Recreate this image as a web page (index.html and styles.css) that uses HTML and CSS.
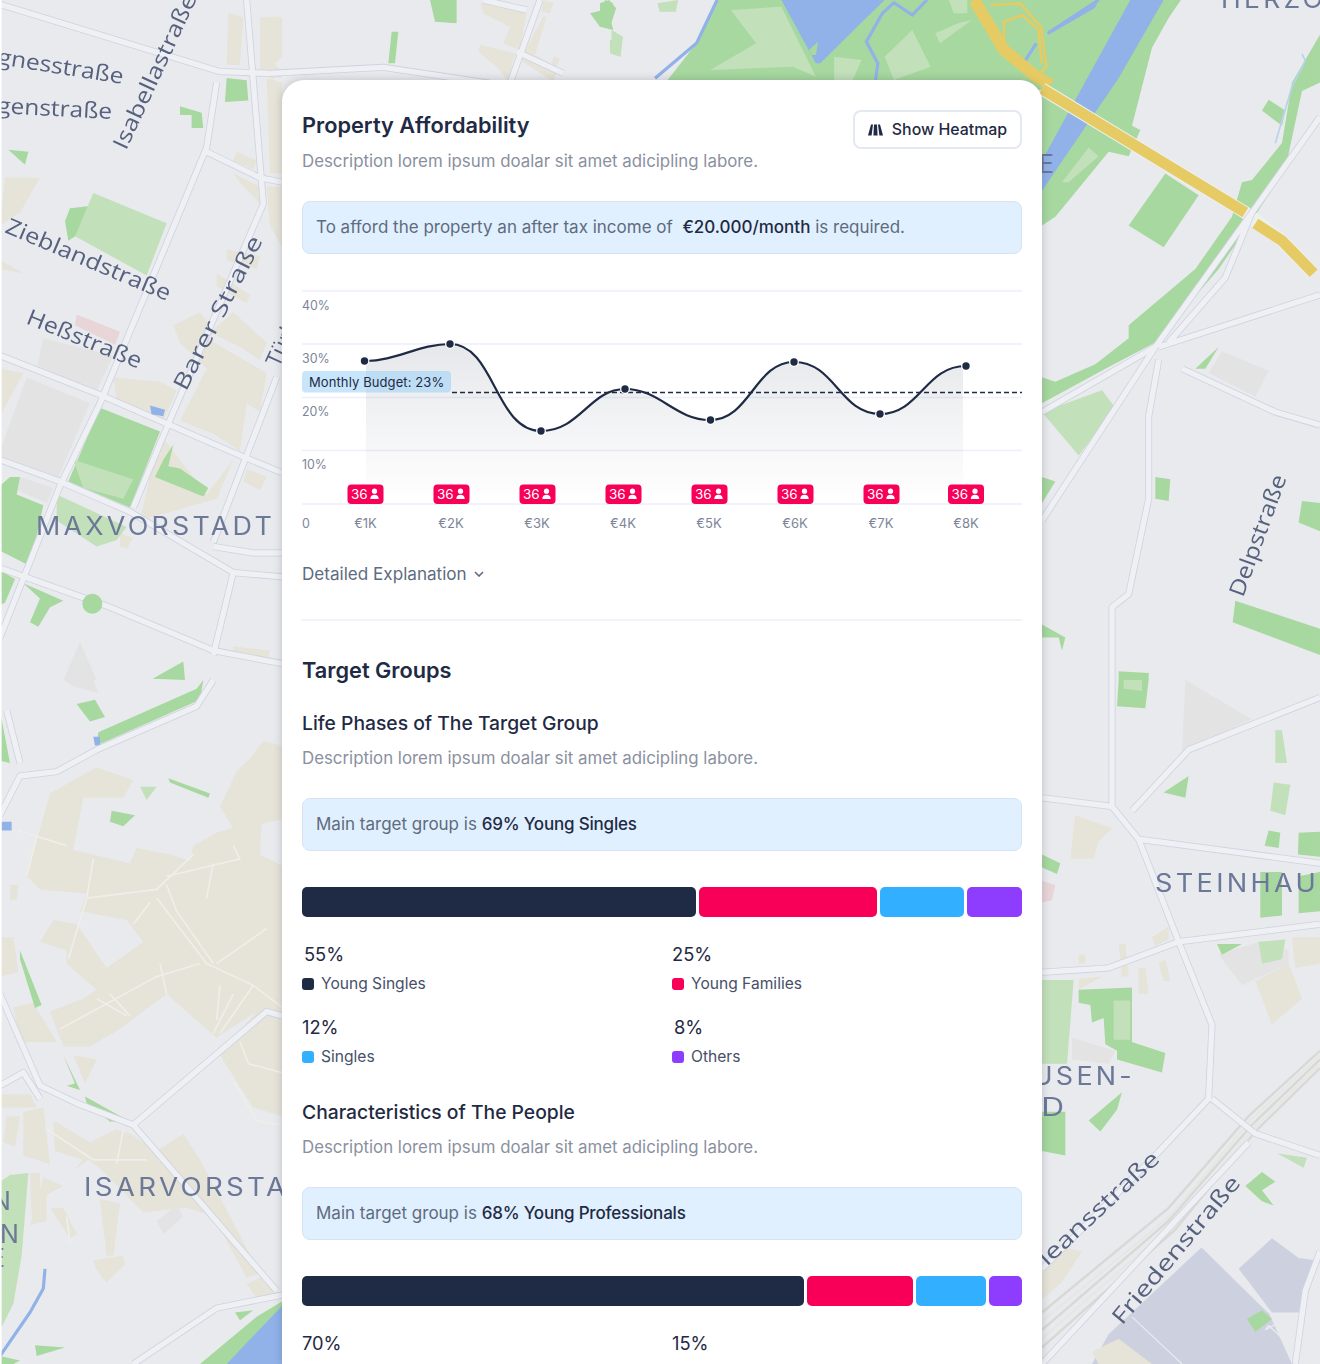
FILE: index.html
```html
<!DOCTYPE html>
<html lang="en">
<head>
<meta charset="utf-8">
<title>Property Affordability</title>
<link rel="stylesheet" href="styles.css">
</head>
<body>
<div class="page">
<svg class="map" viewBox="0 0 1320 1364" width="1320" height="1364" aria-hidden="true">
  <defs>
    <path id="rl1" d="M0 10 L660 165 L846 170 M650 190 L620 340 L300 930 L180 1120 L0 1470 M740 0 L790 470 L520 950 L400 1170 M620 350 L780 410 L846 420 M0 820 L300 910 L720 1050 L846 1090 M0 1060 L180 1110 L390 1180 L700 1320 L640 1510 M0 1310 L220 1370 L330 1400 L640 1500 L846 1530 M830 870 L640 1250 M640 1260 L760 1275 L846 1275 M700 1320 L846 1330"/>
    <path id="rl2" d="M640 0 L590 60 L290 160 L170 210 L60 220 L0 310 M20 70 L60 190 M0 720 L120 930 L230 970 L400 1020 L800 760 L846 770 M0 930 L70 900 L120 960 M400 1020 L830 1400 M400 1568 L650 1440 L846 1410"/>
    <path id="rr1" d="M0 1200 L340 800 L630 490 L834 270 M340 800 L0 950 M350 800 L834 680 M380 790 L550 640 L630 490 M350 830 L320 960 L320 1150 L260 1370 L210 1400 L210 1568 M420 850 L700 950 L834 980"/>
    <path id="rr2" d="M210 0 L210 290 M0 270 L210 290 L290 365 L834 420 M290 365 L410 600 L510 790 L500 960 L340 1090 L0 1350 M0 670 L200 660 L410 600 L834 560 M510 960 L640 1040 L834 1090 M270 300 L440 160 L834 40 M620 1060 L0 1568 M760 1568 L790 1400 L834 1310"/>
    <path id="rt" d="M0 220 L340 202 L660 250 M640 0 L770 30 M810 0 L720 250 M740 155 L880 220"/>
  </defs>
  <rect class="land" width="1320" height="1364"/>

  <g transform="scale(.3333,.4337)">
    <g class="beige">
      <path d="M685 30 L730 40 L720 150 L680 150Z M780 40 L846 40 L846 130 L780 180Z M15 410 L120 410 L60 490 L0 520Z M0 600 L70 630 L0 620Z M710 350 L770 370 L760 390 L700 370Z M700 400 L780 430 L780 470 L720 420Z M800 430 L846 430 L846 570 L810 520Z M800 180 L846 190 L846 400 L810 400Z"/>
      <path d="M520 750 L600 720 L640 760 L700 720 L800 790 L780 830 L720 800 L640 770 L620 780 L800 860 L780 950 L740 930 L720 1040 L640 1000 L540 970 L560 940 L620 850 L540 790Z M680 575 L780 590 L770 620 L680 600Z M650 630 L750 680 L740 700 L650 660Z"/>
      <path d="M340 870 L480 880 L530 900 L490 970 L350 920Z M700 1060 L650 1150 L420 1200 L480 1000 L620 1140 L700 1060Z M740 1080 L800 1100 L780 1130 L730 1110Z M360 1230 L400 1240 L380 1265 L360 1260Z M700 1490 L810 1500 L800 1530 L700 1510Z M0 850 L70 860 L0 960Z"/>
    </g>
    <path class="grey" d="M130 780 L340 820 L290 900 L110 850Z M80 870 L270 930 L175 1100 L10 1060 L0 1040Z M60 1100 L160 1125 L140 1160 L50 1130Z M240 1480 L290 1568 L190 1568Z"/>
    <path class="pink" d="M230 725 L360 765 L345 795 L225 750Z"/>
    <g class="green">
      <path d="M680 180 L740 185 L745 232 L675 235Z M540 245 L605 260 L610 295 L575 295 L575 265 L540 265Z M25 345 L85 350 L75 380Z M195 510 L210 480 L270 475 L235 540 L205 555Z"/>
      <path d="M300 940 L480 995 L390 1170 L205 1110Z M490 1060 L520 1025 L505 1075 L540 1080 L625 1125 L610 1145 L465 1100Z M0 1120 L30 1100 L60 1100 L50 1140 L130 1165 L90 1305 L0 1270Z M0 1315 L45 1335 L15 1390 L0 1395Z M70 1345 L190 1385 L150 1400 L115 1445 L90 1435 L120 1380Z M458 1565 L550 1525 L555 1568Z"/>
    </g>
    <path class="lgreen" d="M280 445 L500 515 L440 635 L225 545Z M220 1060 L400 1105 L370 1150 L250 1125Z M170 1140 L380 1215 L350 1245 L290 1260 L170 1200Z"/>
    <g class="road-o"><use href="#rl1"/></g>
    <g class="road-i"><use href="#rl1"/></g>
    <ellipse class="green" cx="277" cy="1392" rx="30" ry="23"/>
    <path class="water" d="M450 935 L495 945 L490 960 L455 955Z"/>
  </g>

  <g transform="translate(0,680) scale(.3333,.4362)">
    <g class="beige">
      <path d="M80 450 L150 260 L290 200 L400 230 L370 270 L250 270 L220 390 L390 420 L410 385 L510 400 L570 415 L580 380 L650 350 L700 340 L660 290 L710 210 L750 180 L790 140 L846 150 L846 320 L785 330 L780 400 L846 425 L846 1000 L760 980 L660 860 L770 760 L650 820 L590 780 L500 720 L360 800 L270 840 L190 840 L150 760 L250 730 L290 710 L200 650 L200 620 L120 600 L160 550 L230 560 L320 660 L430 600 L380 550 L240 530 L260 490 L120 480Z"/>
      <path d="M0 590 L40 590 L55 670 L0 680Z M30 470 L55 470 L50 505 L30 505Z M40 750 L100 740 L170 830 L60 830Z M0 950 L90 950 L110 980 L0 980Z M220 860 L290 870 L255 925Z M20 1000 L60 1000 L45 1070 L10 1060Z M70 990 L130 980 L150 1110 L70 1090Z M160 1010 L270 1060 L350 1030 L390 1040 L470 1080 L550 1040 L600 1100 L780 1360 L740 1370 L640 1230 L560 1210 L430 1220 L300 1120 L265 1100 L220 1125 L250 1100 L165 1080Z M90 1130 L120 1130 L120 1230 L95 1230Z M130 1140 L190 1160 L140 1180 L140 1240 L90 1250Z M150 1210 L190 1210 L230 1270 L210 1280Z M300 1190 L360 1200 L340 1320 L320 1320Z M280 1330 L370 1320 L375 1340 L320 1380 L305 1370 L285 1345Z M740 1385 L780 1370 L830 1410 L770 1415Z"/>
    </g>
    <path class="grey" d="M470 1240 L530 1205 L550 1230 L490 1270Z M190 0 L280 0 L295 30 L220 15Z"/>
    <g class="beige-line"><path d="M55 345 L200 380 M110 360 L80 450 M280 410 L260 500 L205 640 M470 500 L620 650 L760 700 L660 810 M500 470 L530 530 L640 650 M650 650 L800 570 M180 800 L470 680 L600 650 M450 510 L400 560 M290 730 L380 770 M480 650 L500 720 M330 720 L390 770 M580 400 L470 480 L260 500 M640 420 L620 500 M700 380 L720 410 L500 450 M760 700 L846 750 M720 830 L746 880 L846 900 M700 920 L770 1010 L846 1020 M700 720 L640 810 M660 700 L650 780 M140 1030 L280 1100 L440 1100 M370 1030 L350 1110 M200 1230 L210 1290"/></g>
    <g class="green">
      <path d="M0 70 L30 190 L0 185Z M230 55 L285 45 L315 85 L270 95Z M295 120 L590 20 L610 0 L600 45 L290 150Z M505 225 L630 260 L625 270 L510 235Z M60 620 L125 745 L105 752 L60 640Z M190 860 L240 940 L200 930 L225 925Z M255 955 L390 1012 L330 1012 L260 970Z M335 300 L405 310 L370 335 L330 325Z M105 1525 L195 1530 L110 1550Z M705 1450 L760 1445 L720 1468Z M0 1550 L60 1560 L40 1568 L0 1568Z"/>
      <path d="M600 1568 L770 1460 L846 1425 L846 1568Z"/>
    </g>
    <path class="lgreen" d="M420 245 L470 245 L440 275Z M30 1135 L85 1130 L65 1320 L40 1430 L0 1490 L0 1150Z"/>
    <path class="water-s" d="M135 1350 L130 1395 L90 1450 L0 1550"/>
    <path class="water" d="M280 130 L300 130 L300 150 L285 150Z M5 325 L35 325 L35 345 L5 345Z M680 1568 L846 1435 L846 1568Z"/>
    <g class="road-o"><use href="#rl2"/></g>
    <g class="road-i"><use href="#rl2"/></g>
  </g>

  <g transform="translate(270,0) scale(.3333)">
    <path class="beige" d="M0 50 L25 50 L20 90 L0 90Z M0 175 L40 220 L0 240Z M630 10 L770 40 L750 150 L700 130 L720 80 L640 40Z M630 135 L735 160 L715 245 L680 200 L625 155Z M820 50 L830 50 L795 165 L865 205 L850 245 L750 180Z M850 170 L870 175 L860 200 L845 195Z M820 0 L850 10 L840 40 L815 35Z"/>
    <path class="green" d="M480 0 L560 0 L560 70 L495 65Z M365 95 L385 95 L375 190 L355 190Z M960 40 L1000 30 L1005 0 L1030 10 L1020 50 L1030 90 L990 80Z"/>
    <path class="lgreen" d="M1020 120 L1050 115 L1050 170 L1020 160Z"/>
    <g class="road-o"><use href="#rt"/></g>
    <g class="road-i"><use href="#rt"/></g>
  </g>

  <g transform="translate(600,0) scale(.4592,.3333)">
    <path class="green" d="M255 0 L1265 0 L1200 130 L1175 270 L130 270 L210 130Z"/>
    <path class="green" d="M0 10 L20 0 L35 25 L20 90 L10 60 L0 60Z"/>
    <path class="lgreen" d="M25 90 L50 110 L45 170 L25 160Z M125 10 L170 0 L165 35 L130 35Z"/>
    <path class="lgreen" d="M395 20 L470 230 L420 200 L240 210 L340 130 L285 30 Z M510 170 L570 180 L550 240 L510 240Z M680 90 L720 200 L640 240 L620 170Z M730 100 L780 70 L810 60 L740 130Z M760 0 L800 0 L800 40 L770 40Z"/>
    <path class="water" d="M395 0 L620 0 L560 80 L480 190 L470 190Z M1150 0 L1228 0 L1130 270 L1035 270Z"/>
    <path class="green" d="M455 150 L475 125 L470 165 L460 165Z"/>
    <path class="water-s" d="M255 0 L210 130 L120 235 M600 240 L605 190 L580 125 L615 40 L640 8 L680 45 L712 0 M975 100 L1088 10 M920 195 L950 130"/>
    <text class="lbl-w" transform="translate(1133,175) rotate(-55) scale(.9,1.1)">Isar</text>
    <path class="yellow-t" d="M850 15 L915 10 L960 80 L972 200 L945 240 M880 130 L880 65 L920 45 L955 90 L962 190"/>
    <path class="yellow-s" d="M815 0 L880 150 L950 230 L1010 275"/>
  </g>

  <g transform="translate(1042,0) scale(.3333,.4337)">
    <path class="green" d="M834 80 L750 190 L720 330 L630 415 L600 420 L570 500 L460 620 L260 750 L260 780 L160 840 L40 880 L0 870 L0 930 L190 850 L340 790 L530 620 L620 520 L730 390 L780 210 L834 190Z"/>
    <path class="green" d="M0 220 L90 130 L170 0 L410 0 L330 110 L270 290 L295 300 L260 360 L200 350 L40 500 L0 520Z"/>
    <path class="green" d="M660 255 L680 230 L730 255 L720 290Z M370 400 L470 450 L365 570 L260 520Z M460 850 L530 800 L490 850Z M0 1100 L40 1110 L0 1160Z M340 1100 L385 1105 L380 1155 L340 1150Z M780 1155 L834 1160 L834 1225 L770 1205Z M580 1385 L834 1450 L834 1510 L572 1435Z M0 1440 L70 1470 L60 1500 L50 1470 L0 1470Z M230 1548 L320 1552 L320 1568 L230 1568Z"/>
    <path class="lgreen" d="M0 950 L180 900 L220 940 L110 1050Z M60 420 L140 340 L170 360 L80 420Z"/>
    <path class="grey" d="M500 860 L540 810 L680 855 L640 915Z"/>
    <path class="water" d="M265 0 L365 0 L230 180 L0 440 L0 370 L100 230Z"/>
    <path class="water-s" d="M20 75 L170 0"/>
    <path class="water-thin" d="M780 125 L790 140 L750 200 L700 330"/>
    <path class="road-edge-l" d="M0 205 L610 490 L720 555 L815 630"/>
    <path class="yellow-w" d="M0 205 L610 490 M640 515 L720 555 L815 630"/>
    <g class="road-o"><use href="#rr1"/></g>
    <g class="road-i"><use href="#rr1"/></g>
  </g>

  <g transform="translate(1042,680) scale(.3333,.4362)">
    <path class="grey" d="M430 0 L630 90 L420 165Z M90 820 L220 850 L200 880 L90 870Z M530 630 L650 600 L740 620 L740 650 L600 700Z"/>
    <path class="pink" d="M0 460 L40 470 L30 505 L0 510Z"/>
    <g class="beige"><path d="M100 310 L210 340 L170 370 L155 410 L85 410Z M640 690 L740 650 L780 730 L690 790Z M750 590 L834 590 L834 650 L760 660Z M0 1340 L60 1300 L120 1310 L60 1380 L0 1420Z M110 630 L130 630 L130 650 L110 650Z M230 605 L250 605 L260 680 L240 680Z M330 590 L380 565 L380 595 L340 610Z M290 660 L310 660 L320 720 L290 720Z M350 650 L370 640 L385 690 L365 690Z M110 685 L180 680 L110 710Z"/></g>
    <path class="slate" d="M590 1350 L690 1280 L770 1325 L820 1330 L770 1450 L690 1450Z M200 1500 L480 1300 L680 1450 L750 1568 L150 1568Z"/>
    <path class="beige" d="M150 1540 L230 1510 L330 1568 L170 1568Z"/>
    <path class="white-line" d="M480 1300 L680 1450 M270 1460 L420 1568 M680 1480 L750 1530 L740 1460 L670 1490Z"/>
    <g class="green">
      <path d="M230 0 L320 0 L310 65 L225 60Z M440 220 L430 270 L365 258Z M680 345 L715 350 L710 385 L668 380Z M770 350 L834 348 L834 405 L768 400Z M655 440 L720 440 L720 540 L655 545Z M770 450 L834 440 L834 530 L770 535Z M0 400 L55 420 L45 445 L0 430Z M525 605 L600 605 L540 630Z M110 710 L270 705 L270 830 L370 855 L360 900 L225 870 L225 850 L190 835 L185 775 L150 785 L145 745 L110 740Z M240 945 L225 985 L175 1035 L140 1010Z M0 990 L70 990 L70 1090 L0 1080Z M610 1160 L660 1128 L700 1150 L660 1170 L695 1205 L660 1195Z M615 1465 L660 1445 L690 1465 L640 1495Z"/>
    </g>
    <g class="lgreen">
      <path d="M0 688 L95 688 L75 880 L0 880Z M700 115 L720 115 L735 190 L700 190Z M695 235 L745 240 L730 310 L685 300Z M650 600 L730 595 L720 640 L660 650Z M705 1085 L795 1095 L785 1118Z M215 735 L265 735 L265 825 L215 825Z"/>
    </g>
    <path class="lgreen" d="M245 0 L300 0 L300 25 L245 20Z"/>
    <path class="rail-o" d="M0 1450 L380 1210 L620 1000 L834 850 M0 1490 L380 1240 L630 1020 L834 870 M0 1530 L400 1260 L640 1035 L834 890"/>
    <path class="rail-i" d="M0 1470 L390 1225 L625 1010 L834 860 M0 1510 L390 1250 L635 1028 L834 880"/>
    <g class="road-o"><use href="#rr2"/></g>
    <g class="road-i"><use href="#rr2"/></g>
  </g>

  <g class="lbl">
    <text transform="translate(-3,64) rotate(9)" textLength="127" lengthAdjust="spacingAndGlyphs">gnesstraße</text>
    <text transform="translate(-3,113) rotate(3)" textLength="115" lengthAdjust="spacingAndGlyphs">genstraße</text>
    <text transform="translate(126,151) rotate(-65)" textLength="168" lengthAdjust="spacingAndGlyphs">Isabellastraße</text>
    <text transform="translate(4,232) rotate(23)" textLength="177" lengthAdjust="spacingAndGlyphs">Zieblandstraße</text>
    <text transform="translate(25,323) rotate(22)" textLength="122" lengthAdjust="spacingAndGlyphs">Heßstraße</text>
    <text transform="translate(186,392) rotate(-63)" textLength="170" lengthAdjust="spacingAndGlyphs">Barer Straße</text>
    <text transform="translate(279,368) rotate(-65)">Türk</text>
    <text transform="translate(1243,598) rotate(-70)" textLength="128" lengthAdjust="spacingAndGlyphs">Delpstraße</text>
    <text transform="translate(1022,1290) rotate(-43)" textLength="190" lengthAdjust="spacingAndGlyphs">Orleansstraße</text>
    <text transform="translate(1122,1326) rotate(-50)" textLength="186" lengthAdjust="spacingAndGlyphs">Friedenstraße</text>
  </g>
  <g class="dist">
    <text x="36" y="535" textLength="239" lengthAdjust="spacingAndGlyphs">MAXVORSTADT</text>
    <text x="84" y="1196" textLength="248" lengthAdjust="spacingAndGlyphs">ISARVORSTADT</text>
    <text x="1155" y="892" textLength="228" lengthAdjust="spacingAndGlyphs">STEINHAUSEN</text>
    <text x="988" y="1085" textLength="147" lengthAdjust="spacingAndGlyphs">HAUSEN-</text>
    <text x="982" y="1116" textLength="86" lengthAdjust="spacingAndGlyphs">RIED</text>
    <text x="1221" y="8" textLength="128" lengthAdjust="spacingAndGlyphs">HERZOG</text>
    <text x="1039" y="173">E</text>
    <text x="-8" y="1210">N</text>
    <text x="0" y="1243">N</text>
    <text x="-10" y="1267">E</text>
  </g>
  <rect class="edge" width="1.6" height="1364"/>
</svg>

<main class="card">
  <header class="head">
    <div>
      <h1 class="h1">Property Affordability</h1>
      <p class="desc desc-first">Description lorem ipsum doalar sit amet adicipling labore.</p>
    </div>
    <button class="btn" type="button">
      <svg class="btn-ico" viewBox="0 0 15 12" width="15" height="12" aria-hidden="true"><path d="M3 .5 L5 .5 L3.6 11.5 L0 11.5Z M6 .5 L9 .5 L9.6 11.5 L5.4 11.5Z M10 .5 L12 .5 L15 11.5 L11.4 11.5Z"/></svg>
      Show Heatmap
    </button>
  </header>

  <div class="alert alert-a">To afford the property an after tax income of&nbsp; <b>€20.000/month</b> is required.</div>

  <svg class="chart" viewBox="302 285 720 250" width="720" height="250" role="img" aria-label="Affordability chart">
    <defs>
      <linearGradient id="fade" x1="0" y1="0" x2="0" y2="1">
        <stop offset="0" stop-color="#1f2a44" stop-opacity=".11"/>
        <stop offset="1" stop-color="#1f2a44" stop-opacity="0"/>
      </linearGradient>
    </defs>
    <g class="grid">
      <path d="M302 291H1022M302 344H1022M302 397.5H1022M302 450.5H1022M302 504H1022"/>
    </g>
    <path class="area" d="M366 361 C395 361 420 344 450 344 C495 344 495 431 541 431 C580 431 590 389 625 389 C660 389 675 420 710 420 C750 420 755 362 794 362 C835 362 840 414 880 414 C920 414 925 366 963 366 L963 504 L366 504Z"/>
    <path class="dash" d="M452 392.5H1022"/>
    <rect class="pill" x="302" y="371" width="149" height="21.5" rx="4"/>
    <text class="pill-t" x="309" y="386.5">Monthly Budget: 23%</text>
    <path class="curve" d="M366 361 C395 361 420 344 450 344 C495 344 495 431 541 431 C580 431 590 389 625 389 C660 389 675 420 710 420 C750 420 755 362 794 362 C835 362 840 414 880 414 C920 414 925 366 966 366"/>
    <g class="pts">
      <circle cx="364.500" cy="361" r="3.700"/><circle cx="450" cy="344" r="3.700"/><circle cx="541" cy="431" r="3.700"/><circle cx="625" cy="389" r="3.700"/><circle cx="710.500" cy="420" r="3.700"/><circle cx="794" cy="362" r="3.700"/><circle cx="880" cy="414" r="3.700"/><circle cx="966" cy="366" r="3.700"/>
    </g>
    <g class="ylab">
      <text x="302" y="309.500">40%</text><text x="302" y="362.500">30%</text><text x="302" y="415.500">20%</text><text x="302" y="469">10%</text><text x="302" y="528">0</text>
    </g>
    <g class="xlab">
      <text x="365.500" y="528">€1K</text><text x="451" y="528">€2K</text><text x="537" y="528">€3K</text><text x="623" y="528">€4K</text><text x="709" y="528">€5K</text><text x="795" y="528">€6K</text><text x="881" y="528">€7K</text><text x="966" y="528">€8K</text>
    </g>
    <defs>
      <g id="badge">
        <rect class="b-bg" x="0" y="0" width="36" height="19.500" rx="4"/>
        <text class="b-t" x="3.500" y="14">36</text>
        <circle class="b-i" cx="27" cy="6.700" r="2.600"/>
        <path class="b-i" d="M22.800 14.500 C22.800 11.500 24.500 10.300 27 10.300 C29.500 10.300 31.200 11.500 31.200 14.500Z"/>
      </g>
    </defs>
    <use href="#badge" x="347.500" y="484.500"/><use href="#badge" x="433.500" y="484.500"/><use href="#badge" x="519.500" y="484.500"/><use href="#badge" x="605.500" y="484.500"/><use href="#badge" x="691.500" y="484.500"/><use href="#badge" x="777.500" y="484.500"/><use href="#badge" x="863.500" y="484.500"/><use href="#badge" x="948" y="484.500"/>
  </svg>

  <div class="more">Detailed Explanation
    <svg class="chev" viewBox="0 0 10 6" width="10" height="6" aria-hidden="true"><path d="M1 1 L5 5 L9 1"/></svg>
  </div>
  <hr class="rule">

  <h2 class="h1 h-groups">Target Groups</h2>

  <section class="group">
    <h3 class="h3">Life Phases of The Target Group</h3>
    <p class="desc">Description lorem ipsum doalar sit amet adicipling labore.</p>
    <div class="alert">Main target group is <b class="tight">69% Young Singles</b></div>
    <div class="bar">
      <span class="seg navy" style="flex:394"></span><span class="seg red" style="flex:178"></span><span class="seg blue" style="flex:84"></span><span class="seg violet" style="flex:55"></span>
    </div>
    <div class="legend">
      <div class="item"><div class="val val-in">55%</div><div class="lab"><i class="sw navy"></i>Young Singles</div></div>
      <div class="item"><div class="val">25%</div><div class="lab"><i class="sw red"></i>Young Families</div></div>
      <div class="item"><div class="val">12%</div><div class="lab"><i class="sw blue"></i>Singles</div></div>
      <div class="item"><div class="val val-in">8%</div><div class="lab"><i class="sw violet"></i>Others</div></div>
    </div>
  </section>

  <section class="group group-2">
    <h3 class="h3">Characteristics of The People</h3>
    <p class="desc">Description lorem ipsum doalar sit amet adicipling labore.</p>
    <div class="alert">Main target group is <b class="tight">68% Young Professionals</b></div>
    <div class="bar">
      <span class="seg navy" style="flex:503"></span><span class="seg red" style="flex:106"></span><span class="seg blue" style="flex:70"></span><span class="seg violet" style="flex:33"></span>
    </div>
    <div class="legend">
      <div class="item"><div class="val">70%</div></div>
      <div class="item"><div class="val">15%</div></div>
    </div>
  </section>
</main>
</div>
</body>
</html>
```

FILE: styles.css
```css
* { box-sizing: border-box; }
html, body { margin: 0; padding: 0; background: #fff; }
body { font-family: Inter, "Liberation Sans", sans-serif; color: #1f2a44; }

.page { position: relative; width: 1320px; height: 1364px; overflow: hidden; padding: 80px 0 0 282px; }

/* map */
.map { position: absolute; left: 0; top: 0; display: block; filter: blur(.55px); }
.map path, .map ellipse { vector-effect: non-scaling-stroke; }
.land { fill: #e9eaed; }
.edge { fill: #fff; }
.beige { fill: #e6e3d8; }
.beige-line { fill: none; stroke: #efeeea; stroke-width: 1.7; }
.grey { fill: #e4e3e4; }
.pink { fill: #e8d5d8; }
.green { fill: #a7d89f; }
.lgreen { fill: #c2e0ba; }
.water { fill: #90b2e8; }
.slate { fill: #cdd1df; }
.white-line { fill: none; stroke: #e9eaed; stroke-width: 1.3; }
.water-s { fill: none; stroke: #90b2e8; stroke-width: 3.2; }
.water-thin { fill: none; stroke: #b7d3ec; stroke-width: 1.7; }
.yellow-s { fill: none; stroke: #e6cb64; stroke-width: 12; }
.yellow-t { fill: none; stroke: #e6cb64; stroke-width: 2.6; }
.yellow-w { fill: none; stroke: #e6cb64; stroke-width: 11; }
.road-edge-l { fill: none; stroke: #eef0ee; stroke-width: 13; }
.road-o { fill: none; stroke: #ced2e2; stroke-width: 7; stroke-linejoin: round; }
.road-i { fill: none; stroke: #eff0f3; stroke-width: 5.4; stroke-linejoin: round; }
.rail-o { fill: none; stroke: #d8d8d4; stroke-width: 2.4; }
.rail-i { fill: none; stroke: #e6e6e4; stroke-width: 2; }
.lbl text { font-family: "Open Sans", "Liberation Sans", sans-serif; font-size: 22px; fill: #55617f; }
.lbl-w { font-family: "Open Sans", "Liberation Sans", sans-serif; font-size: 26px; fill: #c9dcf6; }
.dist text { font-family: Inter, "Liberation Sans", sans-serif; font-size: 25px; letter-spacing: 3px; fill: #6b7898; }

/* card */
.card { position: relative; width: 760px; height: 1284px; padding: 29px 20px 0; background: #fff; border-radius: 22px 22px 0 0; box-shadow: 0 0 8px rgba(25, 30, 50, .22); }
.head { display: flex; justify-content: space-between; align-items: flex-start; }
.h1 { margin: 0; font-size: 21.75px; line-height: 32px; font-weight: 600; color: #1f2a44; }
.h3 { margin: 0; font-size: 19.3px; line-height: 28px; font-weight: 500; color: #1f2a44; }
.desc { margin: 0; font-size: 16.85px; line-height: 24px; color: #8a90a0; }
.desc-first { margin-top: 8px; }
.btn { display: flex; align-items: center; justify-content: center; gap: 9px; width: 169px; height: 39px; margin-top: 1px; padding: 0; background: #fff; border: 2px solid #e3e8f3; border-radius: 8px; font: 500 15.9px Inter, sans-serif; color: #1f2a44; }
.btn-ico { fill: #1f2a44; display: block; }

.alert { height: 53px; padding: 0 13px; background: #e1f0fe; border: 1.5px solid #d5e3f3; border-radius: 8px; font-size: 17px; line-height: 51.5px; color: #5e6b80; }
.alert b { font-weight: 500; color: #1f2a44; }
.alert .tight { letter-spacing: -.2px; }
.alert-a { margin-top: 28px; }

.chart { display: block; margin-top: 31px; overflow: visible; }
.grid path { fill: none; stroke: #eef0f9; stroke-width: 1.6; }
.area { fill: url(#fade); }
.dash { fill: none; stroke: #1f2a44; stroke-width: 1.3; stroke-dasharray: 5 3; }
.pill { fill: #90cdf9; fill-opacity: .5; }
.pill-t { font-size: 13px; fill: #1f2a44; letter-spacing: .1px; }
.curve { fill: none; stroke: #1f2a44; stroke-width: 2.2; }
.pts circle { fill: #1f2a44; stroke: #fff; stroke-width: 2.5; paint-order: stroke; }
.ylab text { font-size: 12.4px; fill: #7c8598; }
.xlab text { font-size: 13px; fill: #7c8598; text-anchor: middle; }
.b-bg { fill: #f80057; }
.b-t { font-size: 13.5px; fill: #fff; }
.b-i { fill: #fff; }

.more { display: flex; align-items: center; gap: 7px; margin-top: 27px; font-size: 17.1px; line-height: 24px; color: #5e6b80; }
.chev { fill: none; stroke: #5e6b80; stroke-width: 1.6; display: block; }
.rule { height: 2px; margin: 33px 0 0; border: 0; background: #f1f3f9; }
.h-groups { margin-top: 33px; }
.group { margin-top: 23px; }
.group .desc { margin-top: 9px; }
.group .alert { margin-top: 28px; }
.group-2 { margin-top: 28px; }

.bar { display: flex; gap: 3px; height: 30px; margin-top: 36px; }
.seg { display: block; min-width: 0; border-radius: 5px; }
.navy { background: #1f2a44; }
.red { background: #f80057; }
.blue { background: #32afff; }
.violet { background: #8e3dff; }

.legend { display: grid; grid-template-columns: 370px 1fr; row-gap: 16px; margin-top: 23px; }
.val { font-size: 18.3px; line-height: 28px; color: #1f2a44; }
.val-in { padding-left: 2px; }
.lab { display: flex; align-items: center; gap: 7px; margin-top: 3px; font-size: 15.6px; line-height: 26px; color: #475069; }
.sw { display: block; width: 12px; height: 12px; border-radius: 3px; }
```
